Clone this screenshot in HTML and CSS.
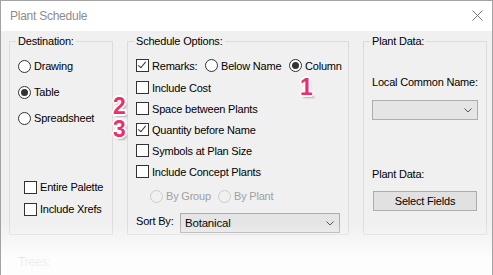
FILE: index.html
```html
<!DOCTYPE html>
<html lang="en">
<head>
    <meta charset="UTF-8">
    <meta name="viewport" content="width=device-width, initial-scale=1.0">
    <title>Plant Schedule</title>
    <link rel="stylesheet" href="styles.css">
</head>
<body>
    <div class="window">
        <div class="titlebar">
            <span class="title">Plant Schedule</span>
            <svg class="close" width="11" height="11" viewBox="0 0 11 11">
                <path d="M0.5 0.5 L10.5 10.5 M10.5 0.5 L0.5 10.5" stroke="#767676" stroke-width="1" fill="none"/>
            </svg>
        </div>

        <div class="content">
            <!-- Destination -->
            <fieldset class="group dest">
                <legend>Destination:</legend>
                <div class="radio-list">
                    <label class="opt"><span class="radio"></span>Drawing</label>
                    <label class="opt"><span class="radio on"></span>Table</label>
                    <label class="opt"><span class="radio"></span>Spreadsheet</label>
                </div>
                <div class="check-list">
                    <label class="opt"><span class="check"></span>Entire Palette</label>
                    <label class="opt"><span class="check"></span>Include Xrefs</label>
                </div>
            </fieldset>

            <!-- Schedule options -->
            <fieldset class="group options">
                <legend>Schedule Options:</legend>
                <div class="row remarks">
                    <label class="opt remarks-label"><span class="check on"></span>Remarks:</label>
                    <label class="opt below"><span class="radio"></span>Below Name</label>
                    <label class="opt"><span class="radio on"></span>Column</label>
                </div>
                <label class="opt row"><span class="check"></span>Include Cost</label>
                <label class="opt row"><span class="check"></span>Space between Plants</label>
                <label class="opt row"><span class="check on"></span>Quantity before Name</label>
                <label class="opt row"><span class="check"></span>Symbols at Plan Size</label>
                <label class="opt row"><span class="check"></span>Include Concept Plants</label>
                <div class="row group-by">
                    <label class="opt disabled by-group"><span class="radio"></span>By Group</label>
                    <label class="opt disabled"><span class="radio"></span>By Plant</label>
                </div>
                <div class="sort-row">
                    <span class="sort-label">Sort By:</span>
                    <div class="select sort-select">
                        <span>Botanical</span>
                        <svg width="8" height="5" viewBox="0 0 8 5"><path d="M0.5 0.5 L4 4 L7.5 0.5" stroke="#555" fill="none"/></svg>
                    </div>
                </div>
            </fieldset>

            <!-- Plant data -->
            <fieldset class="group data">
                <legend>Plant Data:</legend>
                <div class="field-label first">Local Common Name:</div>
                <div class="select name-select">
                    <span></span>
                    <svg width="8" height="5" viewBox="0 0 8 5"><path d="M0.5 0.5 L4 4 L7.5 0.5" stroke="#555" fill="none"/></svg>
                </div>
                <div class="field-label second">Plant Data:</div>
                <button class="btn">Select Fields</button>
            </fieldset>
        </div>

        <div class="next-group">Trees:</div>
        <div class="fade"></div>

        <span class="badge badge-1">1</span>
        <span class="badge badge-2">2</span>
        <span class="badge badge-3">3</span>
    </div>
</body>
</html>
```

FILE: styles.css
```css
body {
    margin: 0;
    background: #ffffff;
    font-family: 'Liberation Sans', Arial, sans-serif;
    font-size: 11px;
    letter-spacing: -0.2px;
    color: #000;
    overflow: hidden;
}

.window {
    position: relative;
    width: 493px;
    height: 275px;
    box-sizing: border-box;
    border: 1px solid #a3a3a3;
    border-bottom: none;
    background: #f0f0f0;
    overflow: hidden;
}

.titlebar {
    height: 30px;
    background: #fff;
    display: flex;
    align-items: center;
    justify-content: space-between;
    padding: 0 9px 0 9px;
}

.title {
    font-size: 12px;
    letter-spacing: -0.25px;
    color: #8c8c8c;
}

.close {
    margin-top: -1px;
}

.content {
    display: flex;
    gap: 14px;
    padding: 3px 0 0 8px;
}

.group {
    margin: 0;
    padding: 0 0 0 8px;
    min-width: 0;
    height: 201px;
    box-sizing: border-box;
    border: 1px solid #dcdcdc;
    display: flex;
    flex-direction: column;
}

.group legend {
    margin-left: -2px;
    padding: 0 2px;
    line-height: 14px;
}

.dest { width: 104px; }
.options { width: 222px; }
.data { width: 124px; }

/* controls */
.opt {
    display: flex;
    align-items: center;
    gap: 3px;
    white-space: nowrap;
}

.radio, .check {
    width: 13px;
    height: 13px;
    box-sizing: border-box;
    border: 1px solid #333;
    background: #fff;
    flex: none;
    position: relative;
}

.radio {
    border-radius: 50%;
}

.radio.on::after {
    content: "";
    position: absolute;
    left: 2px;
    top: 2px;
    width: 7px;
    height: 7px;
    border-radius: 50%;
    background: #333;
}

.check.on::after {
    content: "";
    position: absolute;
    left: 3px;
    top: 0px;
    width: 3px;
    height: 7px;
    border-right: 1px solid #333;
    border-bottom: 1px solid #333;
    transform: rotate(40deg);
}

.disabled {
    color: #a0a0a0;
}

.disabled .radio {
    border-color: #cdcdcd;
    background: #f0f0f0;
}

/* destination */
.radio-list {
    display: flex;
    flex-direction: column;
    gap: 6px;
    padding-top: 8px;
}

.radio-list .opt {
    height: 20px;
}

.check-list {
    display: flex;
    flex-direction: column;
    gap: 2px;
    margin-top: 49px;
    padding-left: 6px;
}

.check-list .opt {
    height: 20px;
}

/* schedule options */
.row {
    height: 21px;
    display: flex;
    align-items: center;
}

.remarks {
    height: 23px;
    margin-top: 6px;
}

.remarks-label {
    width: 69px;
}

.below {
    width: 84px;
}

.group-by {
    height: 20px;
    margin-top: 4px;
    padding-left: 14px;
}

.by-group {
    width: 68px;
}

.sort-row {
    display: flex;
    align-items: center;
    margin-top: 7px;
}

.sort-label {
    width: 44px;
    margin-top: -4px;
}

.select {
    height: 20px;
    box-sizing: border-box;
    border: 1px solid #adadad;
    background: #e5e5e5;
    display: flex;
    align-items: center;
    justify-content: space-between;
    padding: 0 5px 0 4px;
}

.sort-select {
    width: 160px;
    font-size: 11.5px;
}

/* plant data */
.field-label {
    line-height: 14px;
}

.field-label.first {
    margin-top: 27px;
}

.name-select {
    width: 106px;
    margin-top: 11px;
}

.field-label.second {
    margin-top: 47px;
}

.btn {
    width: 104px;
    height: 20px;
    margin: 10px 0 0 1px;
    padding: 0;
    border: 1px solid #adadad;
    background: #e1e1e1;
    font-family: inherit;
    font-size: 11px;
    letter-spacing: -0.2px;
    color: #000;
}

/* next section and fade */
.next-group {
    margin: 20px 0 0 17px;
    font-size: 12px;
    color: #6f6f6f;
}

.fade {
    position: absolute;
    left: 0;
    right: 0;
    top: 222px;
    bottom: 0;
    background: linear-gradient(rgba(255, 255, 255, 0), rgba(255, 255, 255, 0.88) 70%);
}

/* annotation numbers */
.badge {
    position: absolute;
    font-size: 23px;
    font-weight: bold;
    letter-spacing: 0;
    color: #ea306c;
    line-height: 16px;
    text-shadow:
        -1px -1px 0 #fff, 1px -1px 0 #fff, -1px 1px 0 #fff, 1px 1px 0 #fff,
        0 -2px 0 #fff, 0 2px 0 #fff, -2px 0 0 #fff, 2px 0 0 #fff,
        2px 3px 2px rgba(0, 0, 0, 0.25);
}

.badge-1 { left: 299px; top: 78px; }
.badge-2 { left: 112px; top: 97px; }
.badge-3 { left: 112px; top: 120px; }
```
